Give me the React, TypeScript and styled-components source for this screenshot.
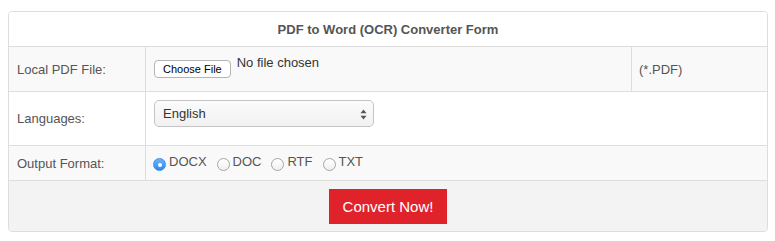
import React from "react";
import styled, { createGlobalStyle } from "styled-components";

const Global = createGlobalStyle`
  html, body { margin: 0; padding: 0; background: #fff; }
  * { box-sizing: border-box; }
  body { font-family: "Liberation Sans", Arial, Helvetica, sans-serif; font-size: 13px; color: #555; }
`;

const Page = styled.div`
  padding: 11px 0 0 8px;
`;

const Form = styled.form`
  width: 760px;
  border: 1px solid #ddd;
  border-radius: 4px;
  overflow: hidden;
  background: #fff;
`;

const Header = styled.div`
  height: 35px;
  border-bottom: 1px solid #ddd;
  display: flex;
  align-items: center;
  justify-content: center;
  font-weight: bold;
  font-size: 13px;
  color: #555;
  background: #fff;
`;

const Row = styled.div<{ $h: number; $shade?: boolean }>`
  display: grid;
  grid-template-columns: 137px 485px 136px;
  height: ${(p) => p.$h}px;
  border-bottom: 1px solid #ddd;
  background: ${(p) => (p.$shade ? "#f9f9f9" : "#fff")};
`;

const LabelCell = styled.div`
  border-right: 1px solid #ddd;
  padding: 0 8px;
  display: flex;
  align-items: center;
  color: #555;
  line-height: 15px;
`;

const FieldCell = styled.div<{ $span?: boolean }>`
  grid-column: ${(p) => (p.$span ? "span 2" : "auto")};
  padding: 8px 8px 0 8px;
  display: flex;
  align-items: flex-start;
`;

const NoteCell = styled.div`
  border-left: 1px solid #ddd;
  padding: 0 7px;
  display: flex;
  align-items: center;
  color: #555;
`;

const FileButton = styled.button`
  margin-top: 5px;
  height: 18px;
  padding: 0 8px;
  border: 1px solid #b4b4b4;
  border-radius: 4px;
  background: #fff;
  font-family: "Liberation Sans", Arial, sans-serif;
  font-size: 11px;
  color: #000;
  line-height: 16px;
  cursor: pointer;
`;

const FileStatus = styled.span`
  margin-left: 6px;
  line-height: 15px;
  color: #333;
  font-size: 13px;
`;

const SelectBox = styled.div`
  position: relative;
  width: 220px;
  height: 27px;
  border: 1px solid #c4c4c4;
  border-radius: 5px;
  background: linear-gradient(#fbfbfb, #f1f1f1);
  display: flex;
  align-items: center;
  padding-left: 8px;
  color: #333;
  font-size: 13px;
`;

const SelectArrows = styled.svg`
  position: absolute;
  right: 6px;
  top: 8px;
`;

const RadioGroup = styled.div`
  display: flex;
  gap: 10px;
  margin-left: -1px;
`;

const RadioItem = styled.label`
  display: flex;
  align-items: flex-start;
  gap: 3px;
  line-height: 15px;
  color: #555;
  font-size: 13px;
`;

const RadioCircle = styled.span<{ $checked?: boolean }>`
  margin-top: 4px;
  width: 13px;
  height: 13px;
  border-radius: 50%;
  flex: none;
  display: flex;
  align-items: center;
  justify-content: center;
  border: 1px solid ${(p) => (p.$checked ? "#3a8ef0" : "#a6a6a6")};
  background: ${(p) => (p.$checked ? "linear-gradient(#6cb3fa, #2f89f0)" : "linear-gradient(#fff, #f0f0f0)")};
  &::after {
    content: "";
    display: ${(p) => (p.$checked ? "block" : "none")};
    width: 4px;
    height: 4px;
    border-radius: 50%;
    background: #fff;
  }
`;

const Footer = styled.div`
  background: #f3f3f3;
  padding: 8px 0 7px;
  display: flex;
  justify-content: center;
`;

const SubmitButton = styled.button`
  height: 35px;
  padding: 0 14px;
  border: none;
  background: #e0232a;
  color: #fff;
  font-family: "Liberation Sans", Arial, sans-serif;
  font-size: 15px;
  cursor: pointer;
`;

const formats = ["DOCX", "DOC", "RTF", "TXT"];

export default function App() {
  return (
    <Page>
      <Global />
      <Form onSubmit={(e) => e.preventDefault()}>
        <Header>PDF to Word (OCR) Converter Form</Header>
        <Row $h={45} $shade>
          <LabelCell>Local PDF File:</LabelCell>
          <FieldCell>
            <FileButton type="button">Choose File</FileButton>
            <FileStatus>No file chosen</FileStatus>
          </FieldCell>
          <NoteCell>(*.PDF)</NoteCell>
        </Row>
        <Row $h={54}>
          <LabelCell>Languages:</LabelCell>
          <FieldCell $span>
            <SelectBox>
              English
              <SelectArrows width="7" height="11" viewBox="0 0 7 11">
                <path d="M3.5 0.5 L6.5 4.2 L0.5 4.2 Z" fill="#555" />
                <path d="M3.5 10.5 L6.5 6.8 L0.5 6.8 Z" fill="#555" />
              </SelectArrows>
            </SelectBox>
          </FieldCell>
        </Row>
        <Row $h={35} $shade>
          <LabelCell>Output Format:</LabelCell>
          <FieldCell $span>
            <RadioGroup>
              {formats.map((f, i) => (
                <RadioItem key={f}>
                  <RadioCircle $checked={i === 0} />
                  {f}
                </RadioItem>
              ))}
            </RadioGroup>
          </FieldCell>
        </Row>
        <Footer>
          <SubmitButton type="submit">Convert Now!</SubmitButton>
        </Footer>
      </Form>
    </Page>
  );
}
